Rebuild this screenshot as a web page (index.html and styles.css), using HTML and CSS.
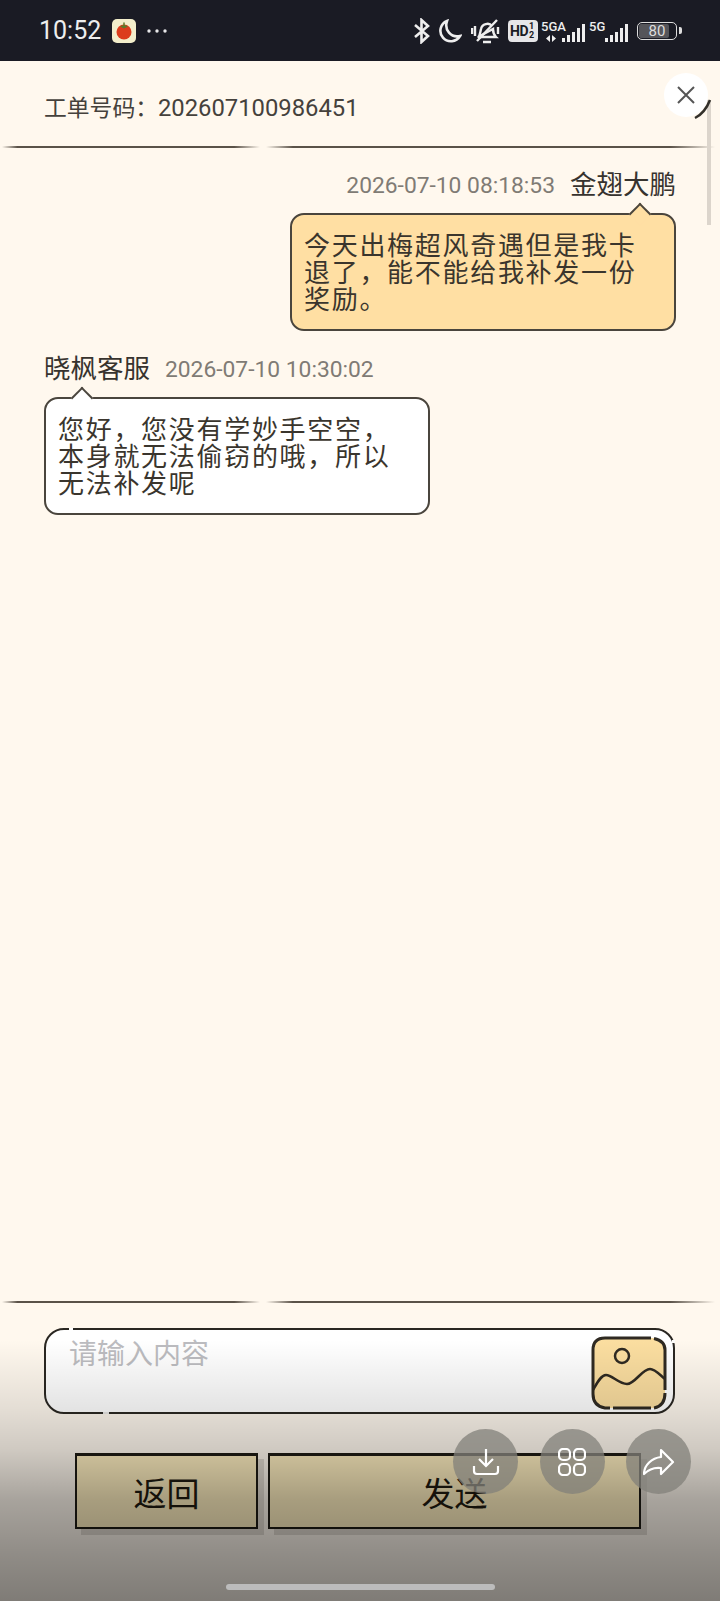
FILE: index.html
```html
<!DOCTYPE html>
<html lang="zh-CN">
<head>
  <meta charset="UTF-8">
  <title>工单详情</title>
  <link rel="stylesheet" href="styles.css">
</head>
<body>
  <div class="phone">
    <div class="statusbar">
      <span class="time">10:52</span>
      <svg class="app-icon" width="24" height="24" viewBox="0 0 24 24">
        <rect width="24" height="24" rx="5" fill="#f3eecb"/>
        <circle cx="12" cy="13" r="7.5" fill="#dc3d1c"/>
        <path d="M8 7.5q4-2.500 8 0l-4 2z" fill="#5d7a2a"/>
        <path d="M12 3.500v4" stroke="#5d7a2a" stroke-width="1.5"/>
      </svg>
      <svg class="dots" width="20" height="4" viewBox="0 0 20 4" fill="#e8e8ea">
        <circle cx="2" cy="2" r="1.7"/><circle cx="10" cy="2" r="1.7"/><circle cx="18" cy="2" r="1.7"/>
      </svg>
      <div class="status-right">
        <svg width="18" height="26" viewBox="0 0 18 26" fill="none" stroke="#eee" stroke-width="2.6">
          <path d="M2 7l13 11-6.500 6V2L15 8 2 19"/>
        </svg>
        <svg class="moon" width="23" height="24" viewBox="0 0 23 24" fill="none" stroke="#eee" stroke-width="2.6">
          <path d="M8 2a10.500 10.500 0 1 0 13 15C12 19 5 11 8 2z"/>
        </svg>
        <svg class="bell" width="30" height="26" viewBox="0 0 30 26" fill="none" stroke="#eee" stroke-width="2.4">
          <path d="M7 20c2-2 2-5 3-9 1-5 8-7 11-3M22 11c0 4 1 6 3 8H7zM12 24h8"/>
          <path d="M26 2L6 23M1 10v6M4 8v10M27 9v7"/>
        </svg>
        <span class="hd"><b>HD</b><i>1<br>2</i></span>
        <span class="signal sig-a">
          <span class="net">5GA</span>
          <svg class="updown" width="12" height="7" viewBox="0 0 12 7" fill="#eee">
            <path d="M5 0v7L1 3.500zM7 0v7l4-3.500z"/>
          </svg>
          <span class="bars"><u class="b0"></u><u class="b1"></u><u class="b2"></u><u class="b3"></u><u class="b4"></u></span>
        </span>
        <span class="signal sig-b">
          <span class="net">5G</span>
          <span class="bars"><u class="b0"></u><u class="b1"></u><u class="b2"></u><u class="b3"></u><u class="b4"></u></span>
        </span>
        <span class="battery"><span class="level"></span><span class="pct">80</span></span>
        <span class="battery-tip"></span>
      </div>
    </div>

    <div class="ticket">工单号码：<span>202607100986451</span></div>
    <div class="rule"><span class="seg-l"></span><span class="seg-r"></span></div>

    <div class="messages">
      <div class="msg mine">
        <div class="meta">
          <span class="stamp">2026-07-10 08:18:53</span>
          <span class="who">金翅大鹏</span>
        </div>
        <div class="bubble yellow">今天出梅超风奇遇但是我卡退了，能不能给我补发一份奖励。</div>
      </div>
      <div class="msg theirs">
        <div class="meta">
          <span class="who">晓枫客服</span>
          <span class="stamp">2026-07-10 10:30:02</span>
        </div>
        <div class="bubble white">您好，您没有学妙手空空，本身就无法偷窃的哦，所以无法补发呢</div>
      </div>
    </div>

    <div class="rule"><span class="seg-l"></span><span class="seg-r"></span></div>

    <div class="composer">
      <div class="input">
        <span class="placeholder">请输入内容</span>
        <svg class="pic" width="76" height="74" viewBox="0 0 76 74">
          <rect x="2" y="2" width="72" height="70" rx="12" fill="#fbdea0"/>
          <path d="M14 2H60M63 2.500Q74 5 74 14V54M74 57Q74 70 63 72M60 72H22M19 72H14Q2 70 2 58V14Q2 2 14 2" fill="none" stroke="#2f2a22" stroke-width="3"/>
          <circle cx="31" cy="20" r="7" fill="none" stroke="#2f2a22" stroke-width="2.500"/>
          <path d="M2 54C6 47 10 39 15 39C21 39 28 48 36 48C44 48 51 33 59 33C64 33 69 39 74 43" fill="none" stroke="#2f2a22" stroke-width="2.500"/>
        </svg>
        <span class="nick"></span>
      </div>
    </div>

    <div class="actions">
      <button class="btn back">返回</button>
      <button class="btn send">发送</button>
    </div>

    <div class="fade"></div>
    <div class="home-bar"></div>
    <div class="scrollbar"></div>

    <div class="close">
      <svg width="20" height="20" viewBox="0 0 20 20" stroke="#555" stroke-width="2" fill="none">
        <path d="M2 2l16 16M18 2L2 18"/>
      </svg>
    </div>
    <svg class="close-tick" width="18" height="22" viewBox="0 0 18 22" fill="none" stroke="#33302a" stroke-width="2.500">
      <path d="M1 20q10-5 15-18"/>
    </svg>

    <div class="float-btns">
      <div class="round">
        <svg width="28" height="28" viewBox="0 0 28 28" fill="none" stroke="#fff" stroke-width="2.200">
          <path d="M14 1v17M7 11l7 7 7-7M2 18v5q0 3 3 3h18q3 0 3-3v-5"/>
        </svg>
      </div>
      <div class="round">
        <svg width="28" height="28" viewBox="0 0 28 28" fill="none" stroke="#fff" stroke-width="2.200">
          <rect x="1" y="1" width="11" height="11" rx="4"/><rect x="16" y="1" width="11" height="11" rx="4"/>
          <rect x="1" y="16" width="11" height="11" rx="4"/><rect x="16" y="16" width="11" height="11" rx="4"/>
        </svg>
      </div>
      <div class="round">
        <svg width="32" height="28" viewBox="0 0 32 28" fill="none" stroke="#fff" stroke-width="2.200">
          <path d="M18 2l12 12-12 12v-6C10 19 5 22 1 26c0-9 8-16 17-17z" stroke-linejoin="round"/>
        </svg>
      </div>
    </div>
  </div>
</body>
</html>
```

FILE: styles.css
```css
* {
  box-sizing: border-box;
}
body {
  margin: 0;
  font-family: Roboto, "Noto Sans CJK SC", sans-serif;
}
.phone {
  position: relative;
  width: 720px;
  height: 1601px;
  overflow: hidden;
  background: #fff8ee;
  display: flex;
  flex-direction: column;
  color: #37332e;
}

/* status bar */
.statusbar {
  height: 61px;
  flex: none;
  background: #1a1b24;
  display: flex;
  align-items: center;
  padding: 0 39px;
  color: #eee;
}
.time {
  font-size: 25px;
  width: 73px;
}
.dots {
  margin-left: 11px;
}
.status-right {
  margin-left: auto;
  margin-right: -1px;
  display: flex;
  align-items: center;
}
.moon {
  margin-left: 8px;
}
.bell {
  margin-left: 9px;
}
.hd {
  margin-left: 7px;
  width: 30px;
  height: 22px;
  background: #e6e6e8;
  border-radius: 4px;
  color: #1a1b24;
  display: flex;
  align-items: center;
  padding-left: 2px;
}
.hd b {
  font-size: 14px;
  line-height: 1;
  letter-spacing: -0.5px;
}
.hd i {
  font-size: 9px;
  font-style: normal;
  font-weight: bold;
  line-height: 9px;
  margin-left: 1px;
}
.signal {
  position: relative;
  display: block;
  height: 22px;
}
.sig-a {
  width: 44px;
  margin-left: 3px;
}
.sig-b {
  width: 39px;
  margin-left: 4px;
}
.net {
  position: absolute;
  left: 0;
  top: 1px;
  font-size: 13px;
  font-weight: 500;
  line-height: 12px;
}
.updown {
  position: absolute;
  left: 4px;
  bottom: 0;
}
.bars {
  position: absolute;
  right: 0;
  bottom: 0;
  display: flex;
  align-items: flex-end;
  gap: 1.500px;
}
.bars u {
  display: block;
  width: 3.500px;
  background: #eee;
}
.b0 { height: 4px; }
.b1 { height: 7px; }
.b2 { height: 10px; }
.b3 { height: 14px; }
.b4 { height: 18px; }
.battery {
  position: relative;
  margin-left: 9px;
  width: 40px;
  height: 18px;
  border: 1.500px solid #ddd;
  border-radius: 5px;
  display: flex;
  align-items: center;
  justify-content: center;
  overflow: hidden;
}
.level {
  position: absolute;
  left: 1px;
  top: 1px;
  bottom: 1px;
  width: 80%;
  background: #55555a;
  border-radius: 2px;
}
.pct {
  position: relative;
  font-size: 15px;
  color: #ddd;
}
.battery-tip {
  width: 3px;
  height: 7px;
  margin-left: 2px;
  background: #ddd;
  border-radius: 0 2px 2px 0;
}

/* ticket header */
.ticket {
  height: 85px;
  flex: none;
  padding: 29px 0 0 44px;
  font-size: 22.800px;
  line-height: 36px;
  color: #45413c;
}
.ticket span {
  font-size: 23.800px;
}
.rule {
  flex: none;
  height: 3px;
  padding: 0 5px 0 2px;
  display: flex;
  gap: 6px;
}
.rule span {
  display: block;
  height: 2px;
  background: linear-gradient(90deg, #fff8ee, #5a5248 6%, #5a5248 90%, #fff8ee);
}
.seg-l {
  width: 258px;
}
.seg-r {
  flex: 1;
}

/* chat */
.messages {
  flex: 1;
  padding: 16px 0 0 44px;
}
.msg {
  width: 632px;
  margin-bottom: 18px;
  display: flex;
  flex-direction: column;
}
.mine {
  align-items: flex-end;
}
.theirs {
  align-items: flex-start;
}
.meta {
  display: flex;
  align-items: center;
  gap: 15px;
  height: 40px;
  margin-bottom: 8px;
}
.stamp {
  font-size: 22.800px;
  color: #807b75;
}
.who {
  margin-top: -5px;
  font-size: 26.500px;
  color: #37332e;
}
.bubble {
  position: relative;
  width: 386px;
  height: 118px;
  padding: 18px 16px 0 12px;
  border: 2px solid #4a453d;
  border-radius: 14px;
  font-size: 26px;
  letter-spacing: 1.700px;
  line-height: 27px;
  color: #3a352d;
}
.bubble::before {
  content: "";
  position: absolute;
  top: -9px;
  width: 14px;
  height: 14px;
  border-left: 2px solid #4a453d;
  border-top: 2px solid #4a453d;
  background: inherit;
  transform: rotate(45deg);
}
.yellow {
  background: #ffdfa3;
}
.yellow::before {
  right: 26px;
}
.white {
  background: #fff;
}
.white::before {
  left: 28px;
}

/* input and buttons */
.composer {
  flex: none;
  height: 149px;
  padding: 24px 45px 0 44px;
}
.input {
  position: relative;
  height: 86px;
  border: 2px solid #2a2722;
  border-radius: 20px;
  background: #fff;
  display: flex;
  justify-content: space-between;
  padding: 6px 6px 0 23px;
}
/* little breaks in the hand drawn outline */
.input::before,
.input::after,
.nick {
  content: "";
  position: absolute;
  background: #fff;
}
.input::before {
  left: 23px;
  top: -2px;
  width: 4px;
  height: 2px;
}
.input::after {
  left: 57px;
  bottom: -2px;
  width: 6px;
  height: 2px;
  background: #e8e7e5;
}
.nick {
  right: -2px;
  top: 10px;
  width: 3px;
  height: 3px;
  background: #fdfcf9;
}
.placeholder {
  margin-top: -2px;
  font-size: 28px;
  line-height: 42px;
  color: #bcbcc0;
}
.actions {
  flex: none;
  height: 148px;
  padding-left: 75px;
  display: flex;
  gap: 10px;
  align-items: flex-start;
}
.btn {
  height: 76px;
  padding: 0;
  border: 2px solid #1e1b14;
  border-top-width: 3px;
  background: #ffefc0;
  box-shadow: 6px 6px 0 rgba(60, 55, 50, 0.16);
  font-family: inherit;
  font-size: 33px;
  color: #1f1a10;
}
.back {
  width: 183px;
}
.send {
  width: 373px;
}

/* overlays */
.fade {
  position: absolute;
  left: 0;
  right: 0;
  bottom: 0;
  height: 261px;
  pointer-events: none;
  background: linear-gradient(rgba(0, 0, 0, 0), rgba(0, 0, 0, 0.11) 27%, rgba(0, 0, 0, 0.19) 42%, rgba(0, 0, 0, 0.34) 61%, rgba(0, 0, 0, 0.44) 83%, rgba(0, 0, 0, 0.5));
}
.home-bar {
  position: absolute;
  left: 226px;
  top: 1584px;
  width: 269px;
  height: 6px;
  border-radius: 3px;
  background: #bcbcbc;
}
.scrollbar {
  position: absolute;
  left: 707px;
  top: 100px;
  width: 4px;
  height: 125px;
  background: #dcd5cc;
}
.close {
  position: absolute;
  left: 664px;
  top: 73px;
  width: 44px;
  height: 44px;
  border-radius: 50%;
  background: #fff;
  display: flex;
  align-items: center;
  justify-content: center;
}
.close-tick {
  position: absolute;
  left: 694px;
  top: 98px;
}
.float-btns {
  position: absolute;
  left: 453px;
  top: 1429px;
  display: flex;
  gap: 21.500px;
}
.round {
  width: 65px;
  height: 65px;
  border-radius: 50%;
  background: rgba(130, 128, 122, 0.75);
  display: flex;
  align-items: center;
  justify-content: center;
}
```
